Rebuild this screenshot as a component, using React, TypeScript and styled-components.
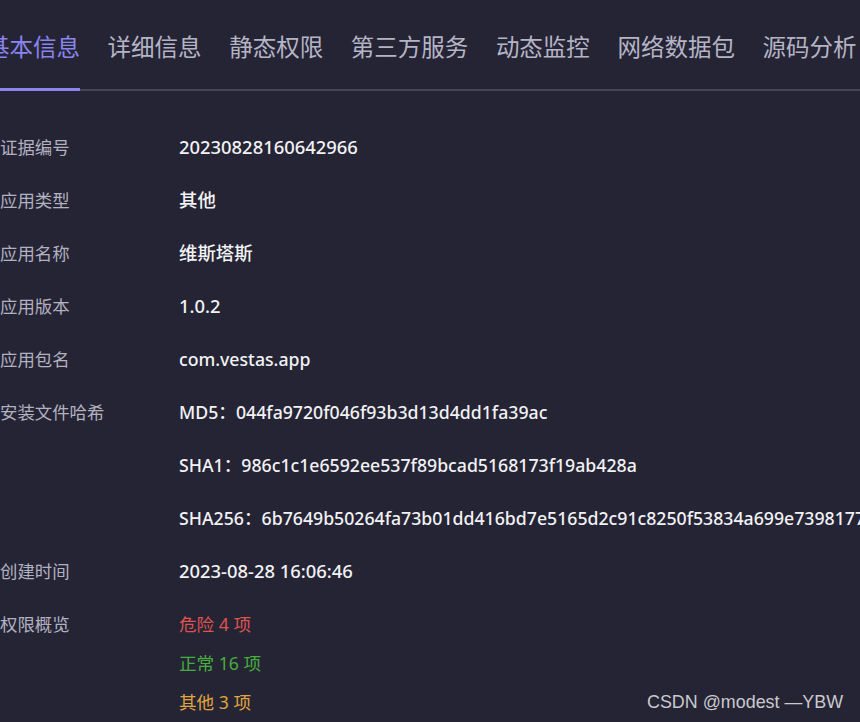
import React from "react";
import styled, { createGlobalStyle } from "styled-components";

const GlobalStyle = createGlobalStyle`
  html, body {
    margin: 0;
    padding: 0;
    background: #252434;
    overflow: hidden;
  }
`;

const Page = styled.div`
  position: relative;
  width: 860px;
  height: 722px;
  background: #252434;
  overflow: hidden;
  font-family: "Noto Sans", "Noto Sans CJK SC", sans-serif;
`;

const TabBar = styled.div`
  display: flex;
  align-items: flex-end;
  height: 91px;
  border-bottom: 2px solid #44435a;
  box-sizing: border-box;
  white-space: nowrap;
`;

const Tab = styled.div<{ active?: boolean }>`
  position: relative;
  flex: none;
  height: 89px;
  display: flex;
  align-items: center;
  margin-right: 27.6px;
  padding-top: 2px;
  box-sizing: border-box;
  font-family: "Noto Sans CJK SC", sans-serif;
  font-size: 23.5px;
  color: ${({ active }) => (active ? "#8a85ee" : "#b5b4c6")};

  &:first-child {
    margin-left: -14px;
  }

  ${({ active }) =>
    active &&
    `
    &::after {
      content: "";
      position: absolute;
      left: 0;
      right: 0;
      bottom: -2px;
      height: 3px;
      background: #8a85ee;
    }
  `}
`;

const Table = styled.div`
  display: flex;
  flex-direction: column;
  padding-top: 36px;
`;

const Row = styled.div`
  display: flex;
  align-items: flex-start;
`;

const Label = styled.div`
  flex: none;
  width: 179px;
  height: 53px;
  line-height: 40px;
  font-family: "Noto Sans CJK SC", sans-serif;
  font-size: 17.4px;
  color: #b2b1c0;
`;

const Values = styled.div`
  display: flex;
  flex-direction: column;
`;

const Value = styled.div<{ tone?: string; tight?: boolean; narrow?: boolean }>`
  height: ${({ tight }) => (tight ? "39px" : "53px")};
  line-height: 40px;
  white-space: nowrap;
  font-family: "Noto Sans", "Noto Sans CJK SC", sans-serif;
  font-size: ${({ tone, narrow }) => (tone ? "17.6px" : narrow ? "17.7px" : "18.4px")};
  font-weight: ${({ tone }) => (tone ? 400 : 500)};
  color: ${({ tone }) => tone || "#f2f2f5"};
`;

const Watermark = styled.div`
  position: absolute;
  left: 647px;
  top: 692px;
  font-family: "Liberation Sans", Arial, sans-serif;
  font-size: 17.9px;
  color: #c9c9cf;
  white-space: nowrap;
`;

const tabs = ["基本信息", "详细信息", "静态权限", "第三方服务", "动态监控", "网络数据包", "源码分析"];

const rows: { label: string; values: string[]; narrow?: boolean }[] = [
  { label: "证据编号", values: ["20230828160642966"] },
  { label: "应用类型", values: ["其他"] },
  { label: "应用名称", values: ["维斯塔斯"] },
  { label: "应用版本", values: ["1.0.2"] },
  { label: "应用包名", values: ["com.vestas.app"], narrow: true },
  {
    label: "安装文件哈希",
    narrow: true,
    values: [
      "MD5：044fa9720f046f93b3d13d4dd1fa39ac",
      "SHA1：986c1c1e6592ee537f89bcad5168173f19ab428a",
      "SHA256：6b7649b50264fa73b01dd416bd7e5165d2c91c8250f53834a699e7398177",
    ],
  },
  { label: "创建时间", values: ["2023-08-28 16:06:46"] },
];

const perms = [
  { text: "危险 4 项", tone: "#df5350" },
  { text: "正常 16 项", tone: "#46ae3c" },
  { text: "其他 3 项", tone: "#e3a43f" },
];

export default function App() {
  return (
    <Page>
      <GlobalStyle />
      <TabBar>
        {tabs.map((t, i) => (
          <Tab key={t} active={i === 0}>
            {t}
          </Tab>
        ))}
      </TabBar>
      <Table>
        {rows.map((r) => (
          <Row key={r.label}>
            <Label>{r.label}</Label>
            <Values>
              {r.values.map((v) => (
                <Value key={v} narrow={r.narrow}>
                  {v}
                </Value>
              ))}
            </Values>
          </Row>
        ))}
        <Row>
          <Label>权限概览</Label>
          <Values>
            {perms.map((p) => (
              <Value key={p.text} tone={p.tone} tight>
                {p.text}
              </Value>
            ))}
          </Values>
        </Row>
      </Table>
      <Watermark>CSDN @modest —YBW</Watermark>
    </Page>
  );
}
